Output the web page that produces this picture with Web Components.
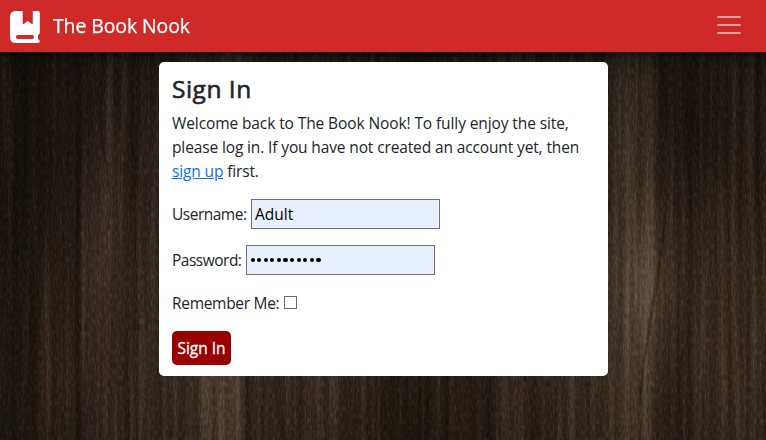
<!DOCTYPE html>
<html lang="en"><head><meta charset="utf-8"><title>The Book Nook</title>
<style>
html,body{margin:0;height:100%;overflow:hidden}
body{font:15.5px/24px "Open Sans","Noto Sans",sans-serif;color:#212529;background:#241b14}
</style></head><body>
<nook-page></nook-page>
<script>
const define=(name,html)=>customElements.define(name,class extends HTMLElement{
  constructor(){super();this.attachShadow({mode:'open'}).innerHTML=html;}
});

define('wood-backdrop',`<style>
:host{display:block;width:766px;height:440px}svg{display:block}
</style>
<svg width="766" height="440" viewBox="0 0 766 440">
<defs>
<linearGradient id="g" gradientUnits="userSpaceOnUse" x1="0" x2="411" y1="0" y2="0" spreadMethod="repeat">
<stop offset="0" stop-color="#211a12"/><stop offset=".05" stop-color="#1d1911"/><stop offset=".11" stop-color="#2d2119"/>
<stop offset=".18" stop-color="#2b2119"/><stop offset=".188" stop-color="#211913"/><stop offset=".21" stop-color="#32261f"/>
<stop offset=".26" stop-color="#3a2c24"/><stop offset=".31" stop-color="#2b2018"/><stop offset=".36" stop-color="#372a21"/>
<stop offset=".41" stop-color="#362a20"/><stop offset=".46" stop-color="#3a2e23"/><stop offset=".53" stop-color="#493a2d"/>
<stop offset=".58" stop-color="#4d3e30"/><stop offset=".60" stop-color="#32261e"/><stop offset=".68" stop-color="#2f241c"/>
<stop offset=".76" stop-color="#392c22"/><stop offset=".85" stop-color="#32261d"/><stop offset=".93" stop-color="#271e16"/><stop offset="1" stop-color="#211a12"/>
</linearGradient>
<linearGradient id="v" x2="0" y2="1"><stop offset="0" stop-color="#080604" stop-opacity=".85"/><stop offset=".13" stop-color="#0b0907" stop-opacity=".64"/><stop offset=".2" stop-color="#0b0907" stop-opacity=".48"/><stop offset=".38" stop-color="#0b0907" stop-opacity=".34"/><stop offset=".62" stop-color="#000" stop-opacity=".04"/><stop offset=".85" stop-color="#000" stop-opacity=".04"/><stop offset="1" stop-color="#000" stop-opacity=".16"/></linearGradient>
<radialGradient id="k"><stop offset="0" stop-color="#a48a70" stop-opacity=".25"/><stop offset="1" stop-color="#a48a70" stop-opacity="0"/></radialGradient>
<radialGradient id="d"><stop offset="0" stop-color="#100d09" stop-opacity=".55"/><stop offset="1" stop-color="#100d09" stop-opacity="0"/></radialGradient>
<filter id="grain" x="0" y="0" width="100%" height="100%" color-interpolation-filters="sRGB">
<feTurbulence type="fractalNoise" baseFrequency=".16 .004" numOctaves="4" seed="8"/>
<feColorMatrix values="1 0 0 0 -.03  1 0 0 0 -.03  1 0 0 0 -.03  0 0 0 0 1"/>
</filter>
<filter id="fine" x="0" y="0" width="100%" height="100%" color-interpolation-filters="sRGB">
<feTurbulence type="fractalNoise" baseFrequency=".6 .16" numOctaves="2" seed="3"/>
<feColorMatrix values="1 0 0 0 0  1 0 0 0 0  1 0 0 0 0  0 0 0 0 1"/>
</filter>
</defs>
<rect width="766" height="440" fill="url(#g)"/>
<rect width="766" height="440" fill="url(#v)"/>
<ellipse cx="650" cy="292" rx="38" ry="112" fill="url(#k)"/>
<ellipse cx="105" cy="230" rx="35" ry="140" fill="url(#k)" opacity=".35"/>
<ellipse cx="690" cy="125" rx="50" ry="100" fill="url(#d)"/>
<ellipse cx="20" cy="190" rx="70" ry="190" fill="url(#d)"/>
<path d="M658 50C668 105 675 160 662 245C656 300 643 345 640 400" fill="none" stroke="#150e08" stroke-width="3" opacity=".3"/>
<path d="M94 50C95 130 115 170 109 230" fill="none" stroke="#150e08" stroke-width="3" opacity=".3"/>
<rect width="766" height="440" filter="url(#grain)" style="mix-blend-mode:soft-light" opacity=".42"/>
<rect width="766" height="440" filter="url(#fine)" style="mix-blend-mode:soft-light" opacity=".4"/>
</svg>`);

define('book-icon',`<style>:host{display:block;width:30px;height:32px;margin-top:2px}svg{display:block}</style>
<svg width="30" height="32" viewBox="0 0 30 32" fill="#fff" fill-rule="evenodd"><path d="M6 0H12.7V12.3Q12.8 13.7 14.1 12.8L17.7 10L21.5 12.8Q22.7 13.5 22.8 12.3V0H27.8Q29.8 0 29.8 2V21.8Q29.8 23.4 28 24V28.2Q29.8 28.5 29.8 30.2Q29.8 32 27.8 32H6Q0 32 0 26V6Q0 0 6 0ZM7.8 24.1Q5.8 24.1 5.8 26Q5.8 28 7.8 28H22.3Q24 28 24 26Q24 24.1 22.3 24.1Z"/></svg>`);

define('menu-toggle',`<style>:host{display:block;width:30px;height:30px}svg{display:block}</style>
<svg width="30" height="30" viewBox="0 0 30 30"><path stroke="rgba(255,255,255,.55)" stroke-linecap="round" stroke-miterlimit="10" stroke-width="2" d="M4 7h22M4 15h22M4 23h22"/></svg>`);

define('nav-bar',`<style>
:host{display:flex;align-items:center;height:52px;box-sizing:border-box;padding:2px 22px 2px 10px;background:#cf2a28;color:#fff;box-shadow:0 2px 8px rgba(0,0,0,.55);position:relative}
.brand{font-size:19.4px;line-height:30px;letter-spacing:-.06px;margin-left:13px;flex:1;-webkit-text-stroke:.25px}
menu-toggle{margin-top:-3px}
</style><book-icon></book-icon><span class="brand"><slot></slot></span><menu-toggle></menu-toggle>`);

define('form-row',`<style>
:host{display:flex;align-items:center;gap:4px;height:30px;margin-bottom:16px}
label{width:var(--label-width);white-space:nowrap;letter-spacing:var(--label-spacing,-.5px)}
</style><label><slot name="label"></slot></label><slot></slot>`);

define('text-field',`<style>
:host{display:flex;align-items:center;width:189px;height:30px;box-sizing:border-box;border:1px solid #6f6f76;background:#e8f0fe;padding:0 3px;color:#000;white-space:nowrap}
</style><slot></slot>`);

define('password-dots',`<style>
:host{display:flex;gap:2.5px;padding:1px 0 0 .5px}i{width:4.1px;height:4.1px;border-radius:50%;background:#000}
</style>${'<i></i>'.repeat(11)}`);

define('check-box',`<style>:host{display:block;width:13px;height:13px;box-sizing:border-box;border:1px solid #6c6c6c;background:#fff;margin-top:-1px}</style>`);

define('submit-button',`<style>
:host{display:flex;align-items:center;justify-content:center;width:59px;height:34px;border-radius:5px;background:#900;color:#fff;white-space:nowrap;-webkit-text-stroke:.3px}
</style><slot></slot>`);

define('sign-in-card',`<style>
:host{display:block;width:449px;height:314px;box-sizing:border-box;margin:10px 0 0 159px;padding:13px;border-radius:5px;background:#fff;position:relative}
h1{margin:0 0 7px;font-size:24.5px;line-height:28.8px;font-weight:500;letter-spacing:.5px;-webkit-text-stroke:.6px}
p{margin:0 0 16px;line-height:24px;white-space:nowrap}
p span{display:block}a{color:#0d6efd;text-decoration:underline}
.a{letter-spacing:-.1px}.b{letter-spacing:-.13px}.c{letter-spacing:-.14px}
.user{--label-width:75px}.pass{--label-width:70px}
.check{height:24px;--label-width:108px;--label-spacing:-.3px}
</style>
<h1>Sign In</h1>
<p><span class="a">Welcome back to The Book Nook! To fully enjoy the site,</span><span class="b">please log in. If you have not created an account yet, then</span><span class="c"><a>sign up</a> first.</span></p>
<form-row class="user"><span slot="label">Username:</span><text-field>Adult</text-field></form-row>
<form-row class="pass"><span slot="label">Password:</span><text-field><password-dots></password-dots></text-field></form-row>
<form-row class="check"><span slot="label">Remember Me:</span><check-box></check-box></form-row>
<submit-button>Sign In</submit-button>`);

define('nook-page',`<style>
:host{display:grid;width:766px;height:440px;overflow:hidden}
wood-backdrop,main{grid-area:1/1}main{display:block;position:relative}
</style><wood-backdrop></wood-backdrop><main><nav-bar>The Book Nook</nav-bar><sign-in-card></sign-in-card></main>`);
</script></body></html>
